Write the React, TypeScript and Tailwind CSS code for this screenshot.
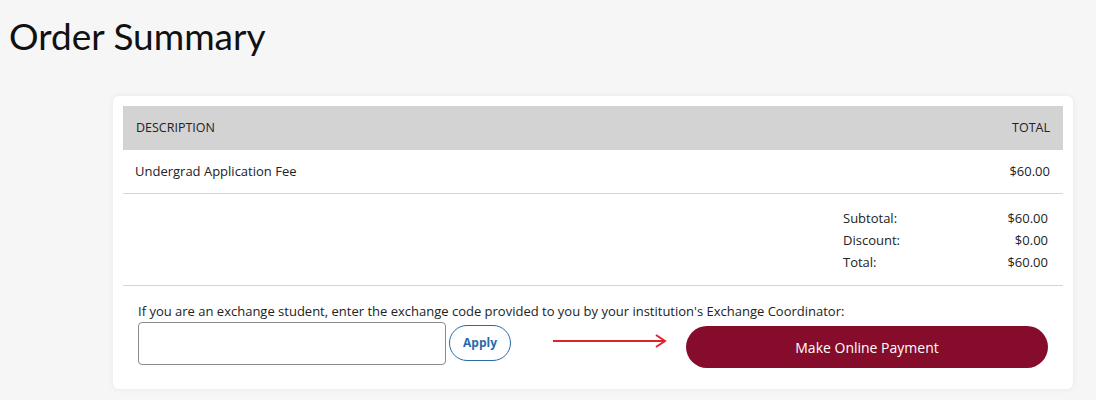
import React from "react";

export default function App() {
  return (
    <div className="min-h-[400px] w-[1096px] bg-[#f6f6f6] text-[#222]" style={{ fontFamily: '"Open Sans", sans-serif' }}>
      <h1 className="pl-[9px] pt-[14px] text-[37px] leading-[44px] text-[#111]" style={{ fontFamily: 'Lato, "Open Sans", sans-serif' }}>
        Order Summary
      </h1>
      <div className="ml-[113px] mt-[38px] w-[960px] rounded-[6px] bg-white p-[10px] pb-[21px] shadow-[0_0_6px_rgba(0,0,0,0.06)]">
        <div className="flex h-[44px] items-center justify-between bg-[#d3d3d3] pl-[13px] pr-[13px] text-[12.5px] text-[#222]">
          <span>DESCRIPTION</span>
          <span>TOTAL</span>
        </div>
        <div className="flex h-[44px] items-center justify-between border-b border-[#d4d4d4] pl-[12px] pr-[13px] text-[13px]">
          <span>Undergrad Application Fee</span>
          <span>$60.00</span>
        </div>
        <div className="flex justify-end border-b border-[#d4d4d4] pb-[12px] pt-[13px] pr-[15px] text-[13px] leading-[22px]">
          <div className="grid grid-cols-[140px_65px]">
            <span>Subtotal:</span>
            <span className="text-right">$60.00</span>
            <span>Discount:</span>
            <span className="text-right">$0.00</span>
            <span>Total:</span>
            <span className="text-right">$60.00</span>
          </div>
        </div>
        <div className="pl-[15px] pt-[15px] text-[13px] leading-[20px]">
          If you are an exchange student, enter the exchange code provided to you by your institution's Exchange Coordinator:
        </div>
        <div className="mt-[1px] flex items-start pl-[15px]">
          <input className="h-[43px] w-[308px] rounded-[4px] border border-[#8a8a8a] bg-white" />
          <button className="ml-[3px] mt-[3px] h-[36px] w-[62px] rounded-full border border-[#2a6aa8] text-[12px] font-bold text-[#2a6aa8]">
            Apply
          </button>
          <svg width="120" height="14" viewBox="0 0 120 14" className="ml-[40px] mt-[12px]">
            <line x1="2" y1="7" x2="113" y2="7" stroke="#e0222f" strokeWidth="2" />
            <path d="M105 1 L114 7 L105 13" fill="none" stroke="#e0222f" strokeWidth="2" />
          </svg>
          <button className="ml-[15px] mt-[4px] h-[42px] w-[362px] rounded-full bg-[#850c2a] text-[14px] text-white">
            Make Online Payment
          </button>
        </div>
      </div>
    </div>
  );
}
